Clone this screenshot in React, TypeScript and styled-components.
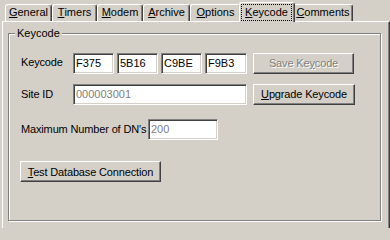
import React from 'react';
import styled, { createGlobalStyle } from 'styled-components';

const Global = createGlobalStyle`
  html, body { margin: 0; padding: 0; background: #d4d0c8; }
  body {
    font-family: "Liberation Sans", Arial, sans-serif;
    font-size: 11px;
    letter-spacing: -0.15px;
    color: #000;
    overflow: hidden;
  }
  #root { width: 390px; height: 228px; overflow: hidden; }
`;

const Window = styled.div`
  width: 390px;
  height: 228px;
  background: #d4d0c8;
  overflow: hidden;
`;

const TabStrip = styled.div`
  display: flex;
  align-items: flex-end;
  height: 21px;
  padding-left: 5px;
  box-sizing: border-box;
`;

const Tab = styled.div<{ $w: number; $active?: boolean }>`
  box-sizing: border-box;
  width: ${(p) => p.$w}px;
  height: ${(p) => (p.$active ? 20 : 17)}px;
  margin: ${(p) => (p.$active ? '0 -2px -1px' : '0')};
  position: relative;
  z-index: ${(p) => (p.$active ? 2 : 1)};
  background: #d4d0c8;
  border-top: 1px solid #fff;
  border-left: 1px solid #fff;
  border-right: 1px solid #404040;
  border-radius: 3px 3px 0 0;
  box-shadow: inset -1px 0 #808080;
  display: flex;
  justify-content: center;
  align-items: flex-start;
  padding-top: 1px;
  line-height: 13px;
  white-space: nowrap;
  letter-spacing: 0;
`;

const FocusRing = styled.span`
  box-sizing: border-box;
  flex: 1;
  margin: 0 2px 0 1px;
  height: 17px;
  border: 1px dotted #000;
  text-align: center;
  line-height: 14px;
`;

const Panel = styled.div`
  box-sizing: border-box;
  margin-left: 2px;
  width: 388px;
  height: 220px;
  border-top: 1px solid #fff;
  border-left: 1px solid #fff;
  border-right: 1px solid #404040;
  box-shadow: inset -1px 0 #808080;
  padding: 11px 0 0 5px;
`;

const GroupBox = styled.div`
  position: relative;
  box-sizing: border-box;
  width: 373px;
  height: 188px;
  border: 1px solid #808080;
  box-shadow: inset 1px 1px #fff, 1px 1px #fff;
  padding: 18px 0 0 11px;
  display: flex;
  flex-direction: column;
`;

const GroupLabel = styled.span`
  position: absolute;
  top: -7px;
  left: 6px;
  padding: 0 2px;
  background: #d4d0c8;
  line-height: 13px;
  letter-spacing: 0;
`;

const Row = styled.div<{ $h: number; $mt?: number }>`
  display: flex;
  align-items: center;
  height: ${(p) => p.$h}px;
  margin-top: ${(p) => p.$mt ?? 0}px;
`;

const Label = styled.span<{ $w?: number; $raise?: number }>`
  width: ${(p) => (p.$w ? `${p.$w}px` : 'auto')};
  flex: none;
  margin-bottom: ${(p) => p.$raise ?? 0}px;
  padding-left: 1px;
  box-sizing: border-box;
  white-space: nowrap;
`;

const Field = styled.input<{ $w: number; $ml?: number }>`
  box-sizing: border-box;
  width: ${(p) => p.$w}px;
  height: 21px;
  margin: 0 0 0 ${(p) => p.$ml ?? 0}px;
  padding: 0 2px;
  font-family: "Liberation Sans", Arial, sans-serif;
  font-size: 11px;
  letter-spacing: 0;
  color: #000;
  background: #fff;
  border: 1px solid;
  border-color: #808080 #fff #fff #808080;
  box-shadow: inset 1px 1px #404040, inset -1px -1px #d4d0c8;
  outline: none;
  &[data-dim='true'] { color: #808080; }
`;

const Button = styled.button<{ $w: number; $ml?: number }>`
  box-sizing: border-box;
  width: ${(p) => p.$w}px;
  height: 21px;
  margin: 0 0 0 ${(p) => p.$ml ?? 0}px;
  padding: 0;
  font-family: "Liberation Sans", Arial, sans-serif;
  font-size: 11px;
  letter-spacing: -0.15px;
  color: #000;
  background: #d4d0c8;
  border: 1px solid;
  border-color: #fff #404040 #404040 #fff;
  box-shadow: inset -1px -1px #808080;
  outline: none;
  white-space: nowrap;
  &:disabled {
    color: #808080;
    text-shadow: 1px 1px 0 #fff;
  }
`;

const tabs: { label: string; w: number }[] = [
  { label: 'General', w: 47 },
  { label: 'Timers', w: 45 },
  { label: 'Modem', w: 46 },
  { label: 'Archive', w: 47 },
  { label: 'Options', w: 51 },
  { label: 'Keycode', w: 56 },
  { label: 'Comments', w: 60 },
];

const Mnemonic = ({ text, index = 0 }: { text: string; index?: number }) => (
  <>
    {text.slice(0, index)}
    <u>{text[index]}</u>
    {text.slice(index + 1)}
  </>
);

export default function App() {
  return (
    <Window>
      <Global />
      <TabStrip>
        {tabs.map((t) =>
          t.label === 'Keycode' ? (
            <Tab key={t.label} $w={t.w} $active>
              <FocusRing>
                <Mnemonic text={t.label} />
              </FocusRing>
            </Tab>
          ) : (
            <Tab key={t.label} $w={t.w}>
              <Mnemonic text={t.label} />
            </Tab>
          )
        )}
      </TabStrip>
      <Panel>
        <GroupBox>
          <GroupLabel>Keycode</GroupLabel>
          <Row $h={22}>
            <Label $w={53} $raise={2}>Keycode</Label>
            <Field $w={41} readOnly value="F375" />
            <Field $w={41} $ml={3} readOnly value="5B16" />
            <Field $w={41} $ml={3} readOnly value="C9BE" />
            <Field $w={42} $ml={3} readOnly value="F9B3" />
            <Button $w={101} $ml={6} disabled>
              Save Ke<u>y</u>code
            </Button>
          </Row>
          <Row $h={22} $mt={9}>
            <Label $w={53}>Site ID</Label>
            <Field $w={174} readOnly data-dim="true" value="000003001" />
            <Button $w={102} $ml={6}>
              <Mnemonic text="Upgrade Keycode" />
            </Button>
          </Row>
          <Row $h={22} $mt={13}>
            <Label $w={128}>Maximum Number of DN's</Label>
            <Field $w={70} readOnly data-dim="true" value="200" />
          </Row>
          <Row $h={21} $mt={21}>
            <Button $w={141}>
              <Mnemonic text="Test Database Connection" />
            </Button>
          </Row>
        </GroupBox>
      </Panel>
    </Window>
  );
}
